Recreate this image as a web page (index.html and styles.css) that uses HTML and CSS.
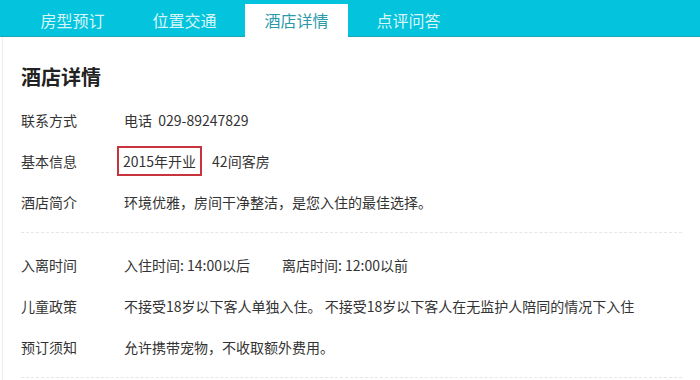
FILE: index.html
```html
<!DOCTYPE html>
<html lang="zh-CN">
<head>
    <meta charset="UTF-8">
    <title>酒店详情</title>
    <link rel="stylesheet" href="styles.css">
</head>
<body>
<div class="tabs">
    <a class="tab">房型预订</a>
    <a class="tab">位置交通</a>
    <a class="tab active">酒店详情</a>
    <a class="tab">点评问答</a>
</div>
<div class="detail">
    <h2 class="title">酒店详情</h2>
    <div class="group">
        <div class="row"><span class="label">联系方式</span><span class="val">电话&nbsp;&nbsp;029-89247829</span></div>
        <div class="row"><span class="label">基本信息</span><span class="val"><span class="mark">2015年开业</span><span class="rooms">42间客房</span></span></div>
        <div class="row"><span class="label">酒店简介</span><span class="val">环境优雅，房间干净整洁，是您入住的最佳选择。</span></div>
    </div>
    <div class="group">
        <div class="row"><span class="label">入离时间</span><span class="val">入住时间: 14:00以后<span class="gap"></span>离店时间: 12:00以前</span></div>
        <div class="row"><span class="label">儿童政策</span><span class="val">不接受18岁以下客人单独入住。 不接受18岁以下客人在无监护人陪同的情况下入住</span></div>
        <div class="row"><span class="label">预订须知</span><span class="val">允许携带宠物，不收取额外费用。</span></div>
    </div>
</div>
</body>
</html>
```

FILE: styles.css
```css
body{
    margin: 0;
    font-family: "Noto Sans CJK SC", "Liberation Sans", sans-serif;
    color: #333;
    background: #fff;
}
.tabs{
    display: flex;
    height: 36px;
    padding-left: 21px;
    background-color: #04c3dc;
    border-bottom: 1px solid #1aa6b8;
}
.tab{
    width: 103px;
    margin-right: 9px;
    margin-top: 4px;
    text-align: center;
    font-size: 16px;
    line-height: 32px;
    color: #d8f6fa;
}
.tab.active{
    background: #fff;
    color: #2a9aa8;
    height: 33px;
}
.detail{
    margin-left: 2px;
    padding: 0 18px 0 18px;
    border-left: 1px solid #ececec;
    height: 343px;
}
.title{
    margin: 0;
    padding-top: 26px;
    font-size: 20px;
    line-height: 28px;
    font-weight: bold;
    color: #222;
}
.group{
    border-bottom: 1px dashed #e6e6e6;
    padding-bottom: 10px;
}
.group + .group{
    padding-top: 11px;
}
.title + .group{
    padding-top: 8px;
}
.row{
    display: flex;
    height: 41px;
    align-items: center;
    font-size: 14px;
}
.label{
    width: 103px;
    flex-shrink: 0;
}
.mark{
    display: inline-block;
    border: 2px solid #c8343e;
    padding: 4px 4px;
    line-height: 18px;
    margin-left: -7px;
    margin-right: 10px;
}
.gap{
    display: inline-block;
    width: 32px;
}
```
